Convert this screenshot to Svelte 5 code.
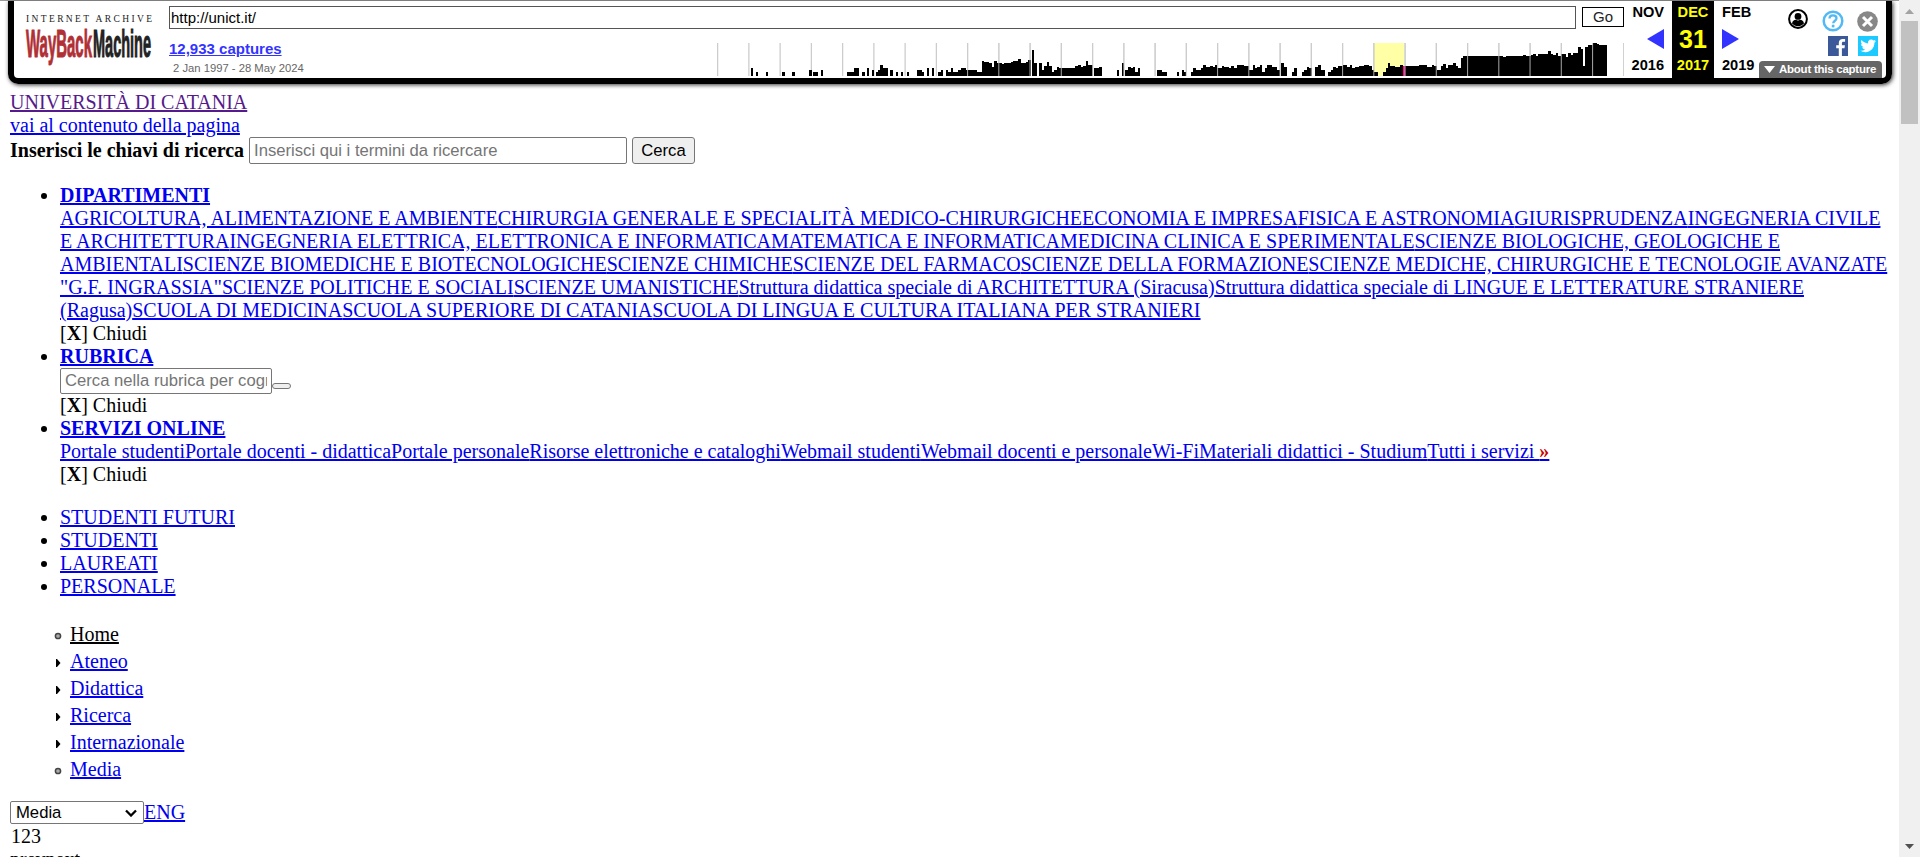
<script>
  const departments = [
    'AGRICOLTURA, ALIMENTAZIONE E AMBIENTE', 'CHIRURGIA GENERALE E SPECIALITÀ MEDICO-CHIRURGICHE',
    'ECONOMIA E IMPRESA', 'FISICA E ASTRONOMIA', 'GIURISPRUDENZA', 'INGEGNERIA CIVILE E ARCHITETTURA',
    'INGEGNERIA ELETTRICA, ELETTRONICA E INFORMATICA', 'MATEMATICA E INFORMATICA',
    'MEDICINA CLINICA E SPERIMENTALE', 'SCIENZE BIOLOGICHE, GEOLOGICHE E AMBIENTALI',
    'SCIENZE BIOMEDICHE E BIOTECNOLOGICHE', 'SCIENZE CHIMICHE', 'SCIENZE DEL FARMACO',
    'SCIENZE DELLA FORMAZIONE', 'SCIENZE MEDICHE, CHIRURGICHE E TECNOLOGIE AVANZATE "G.F. INGRASSIA"',
    'SCIENZE POLITICHE E SOCIALI', 'SCIENZE UMANISTICHE',
    'Struttura didattica speciale di ARCHITETTURA (Siracusa)',
    'Struttura didattica speciale di LINGUE E LETTERATURE STRANIERE (Ragusa)',
    'SCUOLA DI MEDICINA', 'SCUOLA SUPERIORE DI CATANIA', 'SCUOLA DI LINGUA E CULTURA ITALIANA PER STRANIERI'
  ];
  const services = [
    'Portale studenti', 'Portale docenti - didattica', 'Portale personale',
    'Risorse elettroniche e cataloghi', 'Webmail studenti', 'Webmail docenti e personale',
    'Wi-Fi', 'Materiali didattici - Studium'
  ];
  const audiences = ['STUDENTI FUTURI', 'STUDENTI', 'LAUREATI', 'PERSONALE'];
  const menu = [
    ['Home', 'leaf', true], ['Ateneo', 'collapsed', false], ['Didattica', 'collapsed', false],
    ['Ricerca', 'collapsed', false], ['Internazionale', 'collapsed', false], ['Media', 'leaf', false]
  ];

  // Capture histogram, "start end top" in thirds of a pixel; the baseline is at 137.
  const early = '152 160 115,168 175 127,197 205 127,246 254 127,276 284 127,328 336 119,339 355 127,362 370 119,441 463 127,463 478 115,486 494 127,501 508 115,516 523 119,527 534 127,534 541 119,541 550 104,550 564 115,571 579 119,588 595 127,602 609 127,621 628 127,651 666 119,666 673 127,681 688 115,696 703 115,715 722 127,722 729 119,737 745 119,745 752 127,752 759 115,759 774 127,774 782 119,782 797 115,797 831 119,831 846 127,846 853 93,853 868 97,868 875 100,875 883 110,883 890 93,890 905 100,905 912 103,912 932 100,932 940 95,940 955 92,955 962 87,962 977 100,977 985 95,985 992 90,995 1003 60,1003 1010 100,1018 1025 100,1025 1033 119,1033 1040 108,1040 1048 97,1048 1055 108,1055 1062 127,1062 1070 119,1070 1078 110,1078 1086 115,1086 1126 115,1126 1134 108,1134 1142 104,1142 1149 112,1149 1157 108,1157 1164 93,1164 1178 104,1183 1198 115,1198 1206 112,1250 1258 119,1265 1273 100,1276 1284 119,1284 1292 110,1292 1299 115,1299 1306 110,1306 1314 127,1314 1321 115,1370 1378 127,1378 1385 119,1385 1400 127,1430 1438 127';
  const late = '-8 5 119,5 20 127,50 57 127,65 72 119,72 79 127,93 100 127,100 108 115,108 122 119,122 130 115,130 137 104,137 150 110,150 158 108,158 165 110,165 172 106,172 185 115,185 192 108,192 207 110,207 214 115,214 222 108,222 230 115,230 252 105,252 267 108,267 278 119,278 285 104,285 292 115,292 300 112,300 307 104,307 315 127,315 322 115,322 330 106,330 337 104,337 345 112,345 352 110,352 360 119,364 372 100,372 380 110,396 403 127,403 410 115,426 433 127,433 441 119,441 448 112,448 455 115,466 474 112,474 482 104,482 496 119,505 512 127,512 520 119,520 527 112,527 535 115,535 550 108,550 562 104,562 569 112,569 576 104,576 584 115,584 597 112,597 612 108,612 627 104,627 635 108,635 641 119,641 654 127,669 677 127,677 684 115,684 691 100,691 706 108,706 720 110,720 728 106,735 777 108,777 800 105,800 815 110,815 822 105,822 830 108,830 842 119,842 849 108,849 857 102,857 864 115,864 880 105,880 887 100,887 895 108,895 902 115,902 910 83,910 1030 79,1030 1037 82,1037 1090 79,1090 1097 75,1097 1112 79,1112 1120 75,1120 1127 72,1127 1135 77,1135 1165 72,1165 1172 62,1172 1180 72,1180 1187 75,1187 1195 70,1195 1203 77,1203 1217 72,1217 1224 80,1224 1232 70,1232 1240 75,1240 1247 70,1247 1254 68,1254 1262 50,1262 1269 57,1269 1276 108,1276 1284 52,1284 1299 46,1299 1310 39,1310 1317 42,1317 1340 45';
  const parse = (s, dx) => s.split(',').map((r) => {
    const [a, b, t] = r.split(' ').map(Number);
    return { x: (a + dx) / 3, w: (b - a) / 3, y: (t - 39) / 3, h: (137 - t) / 3 };
  });
  const bars = [...parse(early, -51), ...parse(late, 1329)];
  const years = Array.from({ length: 30 }, (_, i) => i * 31.25);
</script>

<div class="shell">
  <div class="page">
    <header class="toolbar">
      <svg class="logo" width="126" height="48" viewBox="0 0 126 48">
        <text x="0" y="8" textLength="126" class="ia">INTERNET ARCHIVE</text>
        <g transform="translate(0 43) scale(1 2.75)">
          <text x="0" y="0" textLength="66" lengthAdjust="spacingAndGlyphs" class="wb red">WayBack</text>
          <text x="67" y="0" textLength="58" lengthAdjust="spacingAndGlyphs" class="wb">Machine</text>
        </g>
      </svg>
      <div class="middle">
        <div class="urlrow">
          <div class="url">http://unict.it/</div>
          <div class="go">Go</div>
        </div>
        <div class="caprow">
          <div class="caps">
            <a href="#captures">12,933 captures</a>
            <span>2 Jan 1997 - 28 May 2024</span>
          </div>
          <svg class="spark" width="907" height="33" viewBox="0 0 907 33">
            <rect x="656.5" y="0" width="31" height="33" fill="#ffffa5" />
            {#each years as x}
              <rect {x} y="0" width="1.25" height="33" fill="#ccc" />
            {/each}
            {#each bars as b}
              <rect x={b.x} y={b.y} width={b.w} height={b.h} shape-rendering="crispEdges" />
            {/each}
            <rect x="685.7" y="23" width="2.3" height="10" fill="#ff008c" shape-rendering="crispEdges" />
            {#each years.slice(8) as x}
              <rect {x} y="0" width="1.1" height="33" fill="#ccc" opacity=".75" />
            {/each}
          </svg>
        </div>
      </div>
      <div class="month prev"><b>NOV</b><svg width="17" height="20"><path d="M17 0v20L0 10z" fill="#33f" /></svg><b>2016</b></div>
      <div class="month now"><b>DEC</b><strong>31</strong><b>2017</b></div>
      <div class="month next"><b>FEB</b><svg width="17" height="20"><path d="M0 0v20l17-10z" fill="#33f" /></svg><b>2019</b></div>
      <div class="tools">
        <div class="icons">
          <svg class="user" width="20" height="20" viewBox="0 0 20 20"><circle cx="10" cy="10" r="8.9" fill="#fff" stroke="#000" stroke-width="2" /><circle cx="10" cy="7.4" r="3.4" /><path d="M4 14.6c.4-2.6 2-3.8 4-3.8 1.3.9 2.7.9 4 0 2 0 3.600 1.200 4 3.800-1.500 1.700-3.500 2.600-6 2.600s-4.500-.9-6-2.600z" /></svg>
          <svg class="help" width="22" height="22" viewBox="0 0 22 22"><circle cx="11" cy="11" r="9.300" fill="none" stroke="#52b9f5" stroke-width="2.500" /><path d="M7.500 8.600c0-2.200 1.500-3.300 3.500-3.300s3.500 1.100 3.500 3c0 2.400-3.300 2.500-3.300 5" fill="none" stroke="#52b9f5" stroke-width="2.300" /><circle cx="11.100" cy="16" r="1.500" fill="#52b9f5" /></svg>
          <svg class="close" width="21" height="21" viewBox="0 0 21 21"><circle cx="10.500" cy="10.500" r="10.300" fill="#888" /><path d="M6 6l9 9M15 6l-9 9" stroke="#fff" stroke-width="3" /></svg>
        </div>
        <div class="social">
          <svg width="20" height="20" viewBox="0 0 20 20"><path fill="#3b5998" d="M0 0h20v20H0z" /><path fill="#fff" d="M10.800 20v-7.700H8.200v-3h2.600V7.100c0-2.700 1.600-4.100 4-4.100 1.100 0 2 .1 2.300.1v2.700h-1.600c-1.300 0-1.600.6-1.600 1.500v2h3l-.4 3h-2.600V20z" /></svg>
          <svg width="20" height="20" viewBox="0 0 20 20"><path fill="#1dcaff" d="M0 0h20v20H0z" /><path fill="#fff" transform="translate(2.400 2) scale(.65)" d="M23.950 4.570a10 10 0 01-2.820.770 4.960 4.960 0 002.160-2.720c-.950.550-2 .950-3.130 1.180a4.920 4.920 0 00-8.380 4.480C7.690 8.090 4.070 6.130 1.640 3.160a4.920 4.920 0 001.520 6.570 4.900 4.900 0 01-2.230-.610v.060a4.920 4.920 0 003.950 4.830 5 5 0 01-2.210.080 4.940 4.940 0 004.600 3.420A9.870 9.870 0 010 19.540a13.990 13.990 0 007.550 2.210c9.050 0 14-7.500 14-13.990l-.020-.630a9.940 9.940 0 002.420-2.560z" /></svg>
        </div>
        <div class="about"><svg width="11" height="7"><path d="M0 0h11L5.500 7z" fill="#fff" /></svg>About this capture</div>
      </div>
    </header>

    <main>
      <div><a class="visited" href="#top">UNIVERSITÀ DI CATANIA</a></div>
      <div><a href="#content">vai al contenuto della pagina</a></div>
      <div class="search"><b>Inserisci le chiavi di ricerca</b><input placeholder="Inserisci qui i termini da ricercare" /><button>Cerca</button></div>

      <ul>
        <li>
          <a href="#dip"><b>DIPARTIMENTI</b></a>
          <div>{#each departments as d}<a href="#d">{d}</a>{/each}</div>
          <div>[<b>X</b>] Chiudi</div>
        </li>
        <li>
          <a href="#rub"><b>RUBRICA</b></a>
          <div class="book"><input placeholder="Cerca nella rubrica per cognome" /><button aria-label="Cerca"></button></div>
          <div>[<b>X</b>] Chiudi</div>
        </li>
        <li>
          <a href="#serv"><b>SERVIZI ONLINE</b></a>
          <div>{#each services as s}<a href="#s">{s}</a>{/each}<a href="#all">Tutti i servizi <b class="more">»</b></a></div>
          <div>[<b>X</b>] Chiudi</div>
        </li>
      </ul>

      <ul>
        {#each audiences as a}<li><a href="#a">{a}</a></li>{/each}
      </ul>

      <nav>
        {#each menu as [label, kind, active]}
          <div class="item">
            {#if kind === 'leaf'}
              <svg width="8" height="8"><circle cx="4" cy="4" r="2.600" fill="#aaa" stroke="#444" stroke-width="1.500" /></svg>
            {:else}
              <svg width="8" height="8"><path d="M2 0v8h1l3.500-4L3 0z" /></svg>
            {/if}
            <a href="#m" class:active>{label}</a>
          </div>
        {/each}
      </nav>

      <div class="lang">
        <div class="select">Media<svg width="12" height="8"><path d="M1 1.500l5 5 5-5" fill="none" stroke="#000" stroke-width="2.300" /></svg></div><a href="#eng">ENG</a>
      </div>
      <div class="pager">123</div>
      <div>prevnext</div>
    </main>
  </div>
  <aside class="scroll">
    <svg width="9" height="5"><path d="M0 5h9L4.500 0z" fill="#a3a3a3" /></svg>
    <div class="thumb"></div>
    <svg class="down" width="9" height="5"><path d="M0 0h9L4.500 5z" fill="#505050" /></svg>
  </aside>
</div>

<style>
  :global(body) { margin: 0; overflow: hidden; background: #fff; }
  * { box-sizing: border-box; }
  .shell { display: flex; height: 857px; overflow: hidden; font: 20px/23px "Liberation Serif", "Times New Roman", serif; color: #000; }
  .page { flex: 1; min-width: 0; border-top: 1px solid #999; }
  svg { display: block; flex: none; }
  a { color: #00e; text-decoration: underline; }
  main a { text-decoration-thickness: 2px; }

  .toolbar { display: flex; height: 83px; margin: 0 7px 0 8px; border: 6px solid #000; border-top: 0; border-radius: 0 0 10px 10px; box-shadow: 1px 1px 4px #333; font-family: "Liberation Sans", Arial, sans-serif; line-height: 1; }
  .logo { margin: 13px 17px 0 12px; overflow: visible; }
  .ia { font: 9.500px "Liberation Serif", serif; fill: #222; }
  .wb { font: bold 14px "Liberation Sans", sans-serif; fill: #222; stroke: #222; stroke-width: .4px; }
  .red { fill: #b03036; stroke: #b03036; }
  .middle { width: 1455px; flex: none; }
  .urlrow { display: flex; gap: 6px; padding-top: 5px; }
  .url { width: 1407px; height: 23px; border: 1px solid #555; padding: 2px 1px; font-size: 15px; line-height: 17px; }
  .go { width: 42px; height: 20px; margin-top: 1px; border: 1px solid #000; text-align: center; font-size: 15px; line-height: 18px; color: #222; }
  .caprow { display: flex; justify-content: space-between; }
  .caps { padding-top: 11px; }
  .caps a { display: block; color: #33f; font-weight: bold; font-size: 15px; line-height: 17px; }
  .caps span { display: block; padding: 6px 0 0 4px; font-size: 11.250px; color: #666; }
  .spark { margin: 14px 0 0; }

  .month { display: flex; flex: none; flex-direction: column; font-size: 14.600px; height: 77px; padding-top: 4px; }
  .month b { font-weight: bold; line-height: 15px; }
  .month svg { margin: 9px 0 9px; }
  .prev { width: 48px; align-items: flex-end; padding-right: 8px; }
  .now { width: 42px; background: #000; color: #ff0; align-items: center; }
  .now strong { font-size: 25px; line-height: 25px; margin: 7px 0 6px; }
  .next { width: 44px; padding-left: 8px; }
  .tools { width: 128px; flex: none; display: flex; flex-direction: column; align-items: flex-end; }
  .icons { display: flex; width: 90px; justify-content: space-between; padding-top: 8px; margin-right: 8px; align-items: flex-start; }
  .help { margin: 1px 0 0; }
  .close { margin-top: 2px; }
  .social { display: flex; gap: 10px; margin: 4px 8px 0 0; }
  .about { display: flex; align-items: center; gap: 4px; width: 123px; height: 17px; margin: 5px 4px 0 0; padding-left: 5px; background: #666; border-radius: 4px 4px 0 0; color: #fff; font-size: 11.500px; letter-spacing: -.25px; font-weight: bold; white-space: nowrap; }

  main { padding: 7px 10px 0; }
  .visited { color: #551a8b; }
  .search { display: flex; height: 27px; margin-bottom: 20px; }
  input { border: 1px solid #767676; border-radius: 2px; font: 16.670px "Liberation Sans", Arial, sans-serif; padding: 1px 4px; margin: 0; background: #fff; }
  input::placeholder { color: #757575; opacity: 1; }
  .search b { line-height: 27px; width: 239px; }
  .search input { width: 378px; height: 27px; margin-right: 5px; }
  button { border: 1px solid #767676; border-radius: 3px; background: #efefef; padding: 0; color: #000; }
  .search button { width: 63px; height: 27px; font: 16.670px "Liberation Sans", Arial, sans-serif; }
  ul { margin: 0 0 20px; padding-left: 50px; }
  .book { display: flex; height: 26px; }
  .book input { width: 212px; height: 26px; }
  .book button { width: 19px; height: 6px; margin-top: 15px; }
  .more { color: #c00; }
  nav { padding: 3px 0 0 44px; }
  .item { display: flex; align-items: center; gap: 8px; height: 27px; }
  .item svg { margin-top: 3px; }
  .active { color: #000; }
  .lang { display: flex; margin-top: 18px; height: 24px; }
  .select { display: flex; align-items: center; justify-content: space-between; width: 134px; height: 23px; border: 1px solid #767676; border-radius: 2px; padding: 0 6px 0 5px; font: 16.670px "Liberation Sans", Arial, sans-serif; }
  .pager { padding-left: 1px; }
  .scroll { display: flex; flex-direction: column; align-items: center; width: 21px; background: #f0f0f0; padding: 9px 0 8px; }
  .thumb { width: 17px; height: 103px; margin-top: 7px; background: #c1c1c1; }
  .down { margin-top: auto; }
</style>
